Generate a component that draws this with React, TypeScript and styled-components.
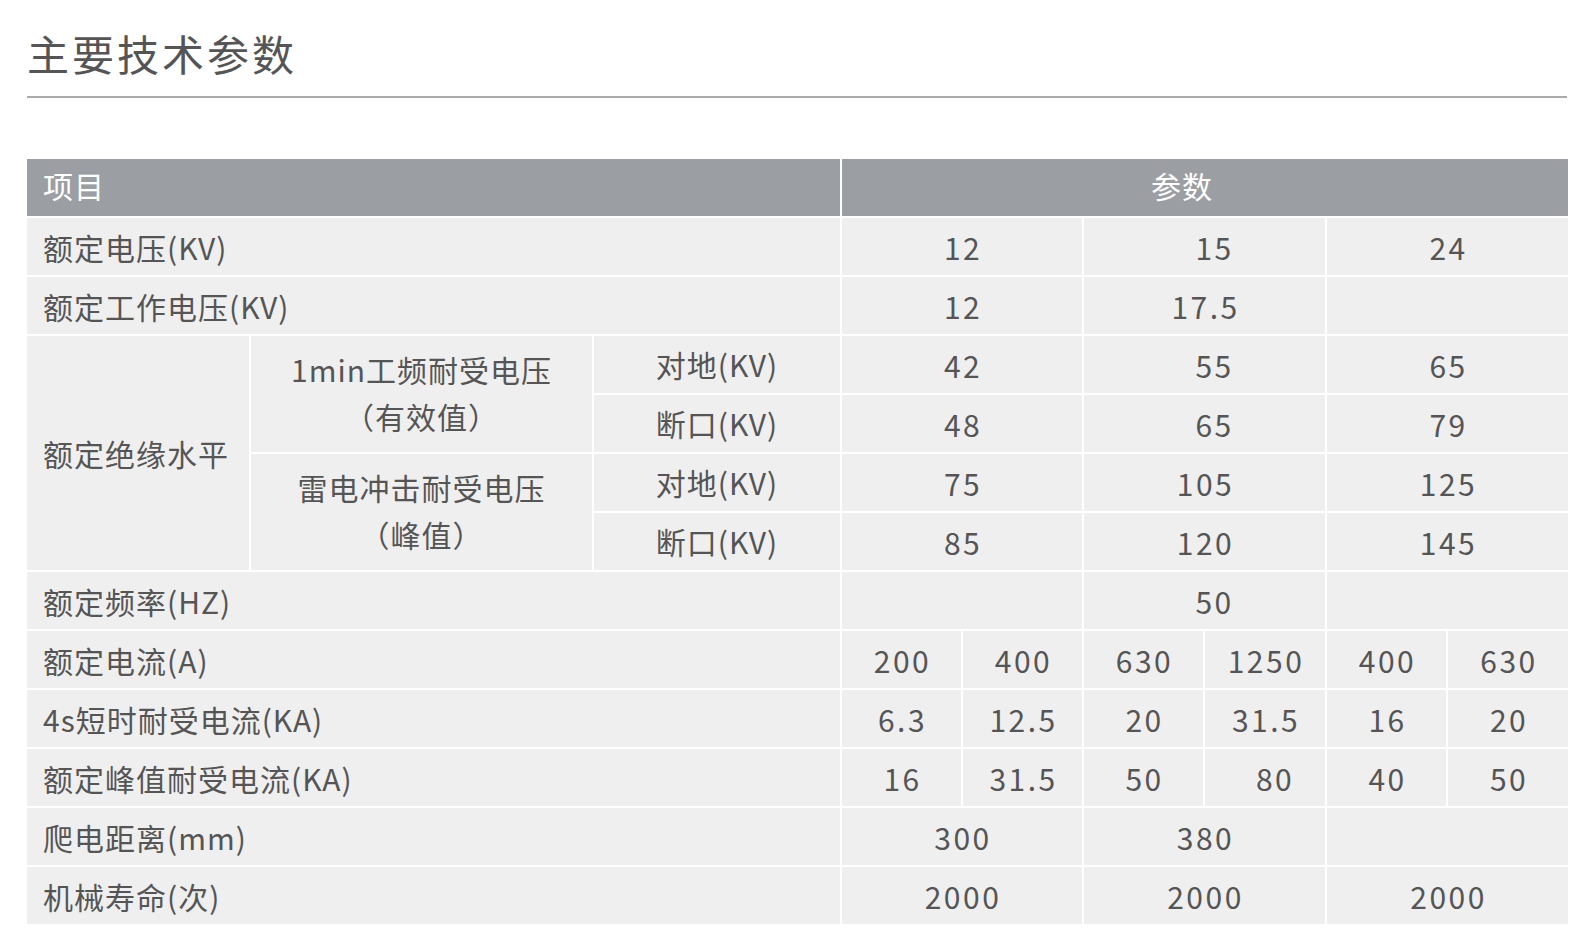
import React from 'react';
import styled, { createGlobalStyle } from 'styled-components';

const GlobalStyle = createGlobalStyle`
  html, body {
    margin: 0;
    padding: 0;
    background: #ffffff;
  }
  body {
    font-family: "Noto Sans CJK SC", "Noto Sans", sans-serif;
    color: #555555;
  }
`;

const Page = styled.div`
  padding: 28px 27px 27px;
`;

const TitleBar = styled.div`
  padding-bottom: 19px;
  border-bottom: 2px solid #ababac;
`;

const Title = styled.h1`
  margin: 0;
  font-size: 42px;
  line-height: 49px;
  font-weight: 400;
  letter-spacing: 3px;
  color: #555555;
`;

const SpecTable = styled.table`
  margin: 59px -2px 0;
  width: 1545px;
  table-layout: fixed;
  border-collapse: separate;
  border-spacing: 2px;
`;

const Col = styled.col<{ $w: number }>`
  width: ${p => p.$w}px;
`;

const Row = styled.tr`
  height: 57px;
`;

const HeadCell = styled.th<{ $align?: 'left' | 'center' }>`
  background: #9b9fa3;
  color: #ffffff;
  font-weight: 400;
  font-size: 30px;
  letter-spacing: 1px;
  line-height: 48px;
  text-align: ${p => p.$align || 'center'};
  padding: ${p => (p.$align === 'left' ? '0 0 5px 16px' : '0 46px 5px 0')};
  vertical-align: middle;
`;

const Cell = styled.td<{ $label?: boolean }>`
  background: #efefef;
  color: #555555;
  font-size: 30px;
  letter-spacing: ${p => (p.$label ? '1px' : '2.5px')};
  line-height: 48px;
  text-align: ${p => (p.$label ? 'left' : 'center')};
  padding: ${p => (p.$label ? '0 0 0 16px' : '0 0 0 2px')};
  vertical-align: middle;
  white-space: nowrap;
`;

const SubLabel = styled.td<{ $multi?: boolean }>`
  background: #efefef;
  color: #555555;
  font-size: 30px;
  letter-spacing: 1px;
  line-height: 47px;
  text-align: center;
  padding: ${p => (p.$multi ? '0 0 2px' : '0 0 1px')};
  vertical-align: middle;
  white-space: nowrap;
`;

const Shifted = styled.span`
  padding-left: 18px;
`;

const App: React.FC = () => {
  return (
    <>
      <GlobalStyle />
      <Page>
        <TitleBar>
          <Title>主要技术参数</Title>
        </TitleBar>

        <SpecTable>
          <colgroup>
            <Col $w={222} />
            <Col $w={341} />
            <Col $w={246} />
            <Col $w={119} />
            <Col $w={119} />
            <Col $w={119} />
            <Col $w={120} />
            <Col $w={119} />
            <Col $w={120} />
          </colgroup>
          <thead>
            <Row>
              <HeadCell colSpan={3} $align="left">项目</HeadCell>
              <HeadCell colSpan={6}>参数</HeadCell>
            </Row>
          </thead>
          <tbody>
            <Row>
              <Cell colSpan={3} $label>额定电压(KV)</Cell>
              <Cell colSpan={2}>12</Cell>
              <Cell colSpan={2}><Shifted>15</Shifted></Cell>
              <Cell colSpan={2}>24</Cell>
            </Row>
            <Row>
              <Cell colSpan={3} $label>额定工作电压(KV)</Cell>
              <Cell colSpan={2}>12</Cell>
              <Cell colSpan={2}>17.5</Cell>
              <Cell colSpan={2}></Cell>
            </Row>
            <Row>
              <Cell rowSpan={4} $label>额定绝缘水平</Cell>
              <SubLabel rowSpan={2} $multi>
                1min工频耐受电压
                <br />
                （有效值）
              </SubLabel>
              <SubLabel>对地(KV)</SubLabel>
              <Cell colSpan={2}>42</Cell>
              <Cell colSpan={2}><Shifted>55</Shifted></Cell>
              <Cell colSpan={2}>65</Cell>
            </Row>
            <Row>
              <SubLabel>断口(KV)</SubLabel>
              <Cell colSpan={2}>48</Cell>
              <Cell colSpan={2}><Shifted>65</Shifted></Cell>
              <Cell colSpan={2}>79</Cell>
            </Row>
            <Row>
              <SubLabel rowSpan={2} $multi>
                雷电冲击耐受电压
                <br />
                （峰值）
              </SubLabel>
              <SubLabel>对地(KV)</SubLabel>
              <Cell colSpan={2}>75</Cell>
              <Cell colSpan={2}>105</Cell>
              <Cell colSpan={2}>125</Cell>
            </Row>
            <Row>
              <SubLabel>断口(KV)</SubLabel>
              <Cell colSpan={2}>85</Cell>
              <Cell colSpan={2}>120</Cell>
              <Cell colSpan={2}>145</Cell>
            </Row>
            <Row>
              <Cell colSpan={3} $label>额定频率(HZ)</Cell>
              <Cell colSpan={2}></Cell>
              <Cell colSpan={2}><Shifted>50</Shifted></Cell>
              <Cell colSpan={2}></Cell>
            </Row>
            <Row>
              <Cell colSpan={3} $label>额定电流(A)</Cell>
              <Cell>200</Cell>
              <Cell>400</Cell>
              <Cell>630</Cell>
              <Cell>1250</Cell>
              <Cell>400</Cell>
              <Cell>630</Cell>
            </Row>
            <Row>
              <Cell colSpan={3} $label>4s短时耐受电流(KA)</Cell>
              <Cell>6.3</Cell>
              <Cell>12.5</Cell>
              <Cell>20</Cell>
              <Cell>31.5</Cell>
              <Cell>16</Cell>
              <Cell>20</Cell>
            </Row>
            <Row>
              <Cell colSpan={3} $label>额定峰值耐受电流(KA)</Cell>
              <Cell>16</Cell>
              <Cell>31.5</Cell>
              <Cell>50</Cell>
              <Cell><Shifted>80</Shifted></Cell>
              <Cell>40</Cell>
              <Cell>50</Cell>
            </Row>
            <Row>
              <Cell colSpan={3} $label>爬电距离(mm)</Cell>
              <Cell colSpan={2}>300</Cell>
              <Cell colSpan={2}>380</Cell>
              <Cell colSpan={2}></Cell>
            </Row>
            <Row>
              <Cell colSpan={3} $label>机械寿命(次)</Cell>
              <Cell colSpan={2}>2000</Cell>
              <Cell colSpan={2}>2000</Cell>
              <Cell colSpan={2}>2000</Cell>
            </Row>
          </tbody>
        </SpecTable>
      </Page>
    </>
  );
};

export default App;
